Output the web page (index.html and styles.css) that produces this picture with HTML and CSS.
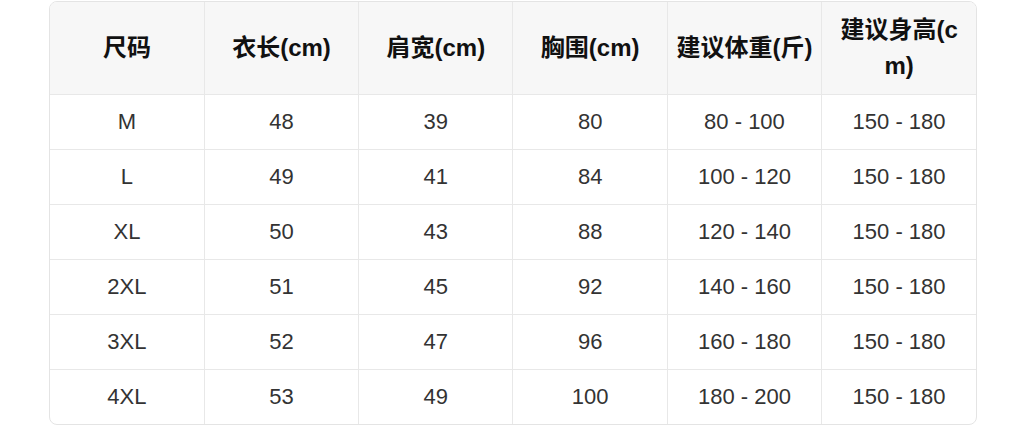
FILE: index.html
```html
<!DOCTYPE html>
<html lang="zh">
<head>
<meta charset="utf-8">
<link rel="stylesheet" href="styles.css">
</head>
<body>
<div class="size-table-wrap">
  <table class="size-table">
    <thead>
      <tr>
        <th>尺码</th>
        <th>衣长(cm)</th>
        <th>肩宽(cm)</th>
        <th>胸围(cm)</th>
        <th>建议体重(斤)</th>
        <th>建议身高(cm)</th>
      </tr>
    </thead>
    <tbody>
      <tr><td>M</td><td>48</td><td>39</td><td>80</td><td>80 - 100</td><td>150 - 180</td></tr>
      <tr><td>L</td><td>49</td><td>41</td><td>84</td><td>100 - 120</td><td>150 - 180</td></tr>
      <tr><td>XL</td><td>50</td><td>43</td><td>88</td><td>120 - 140</td><td>150 - 180</td></tr>
      <tr><td>2XL</td><td>51</td><td>45</td><td>92</td><td>140 - 160</td><td>150 - 180</td></tr>
      <tr><td>3XL</td><td>52</td><td>47</td><td>96</td><td>160 - 180</td><td>150 - 180</td></tr>
      <tr><td>4XL</td><td>53</td><td>49</td><td>100</td><td>180 - 200</td><td>150 - 180</td></tr>
    </tbody>
  </table>
</div>
</body>
</html>
```

FILE: styles.css
```css
html, body {
  margin: 0;
  padding: 0;
  background: #ffffff;
}
body {
  font-family: "Liberation Sans", "Noto Sans CJK SC", sans-serif;
  padding-top: 1px;
}
.size-table-wrap {
  width: 926px;
  margin: 0 0 0 49px;
  border: 1px solid #e4e4e4;
  border-radius: 8px;
  overflow: hidden;
}
.size-table {
  width: 100%;
  border-collapse: collapse;
  table-layout: fixed;
}
.size-table th,
.size-table td {
  text-align: center;
  vertical-align: middle;
  border-right: 1px solid #e8e8e8;
  border-bottom: 1px solid #e8e8e8;
  padding: 10px 6px;
  word-break: break-all;
}
.size-table th:last-child,
.size-table td:last-child {
  border-right: none;
}
.size-table tbody tr:last-child td {
  border-bottom: none;
}
.size-table th {
  background: #f7f7f7;
  color: #111111;
  font-weight: bold;
  font-size: 24px;
  line-height: 36px;
  height: 72px;
}
.size-table td {
  color: #333333;
  font-size: 22px;
  line-height: 34px;
}
```
